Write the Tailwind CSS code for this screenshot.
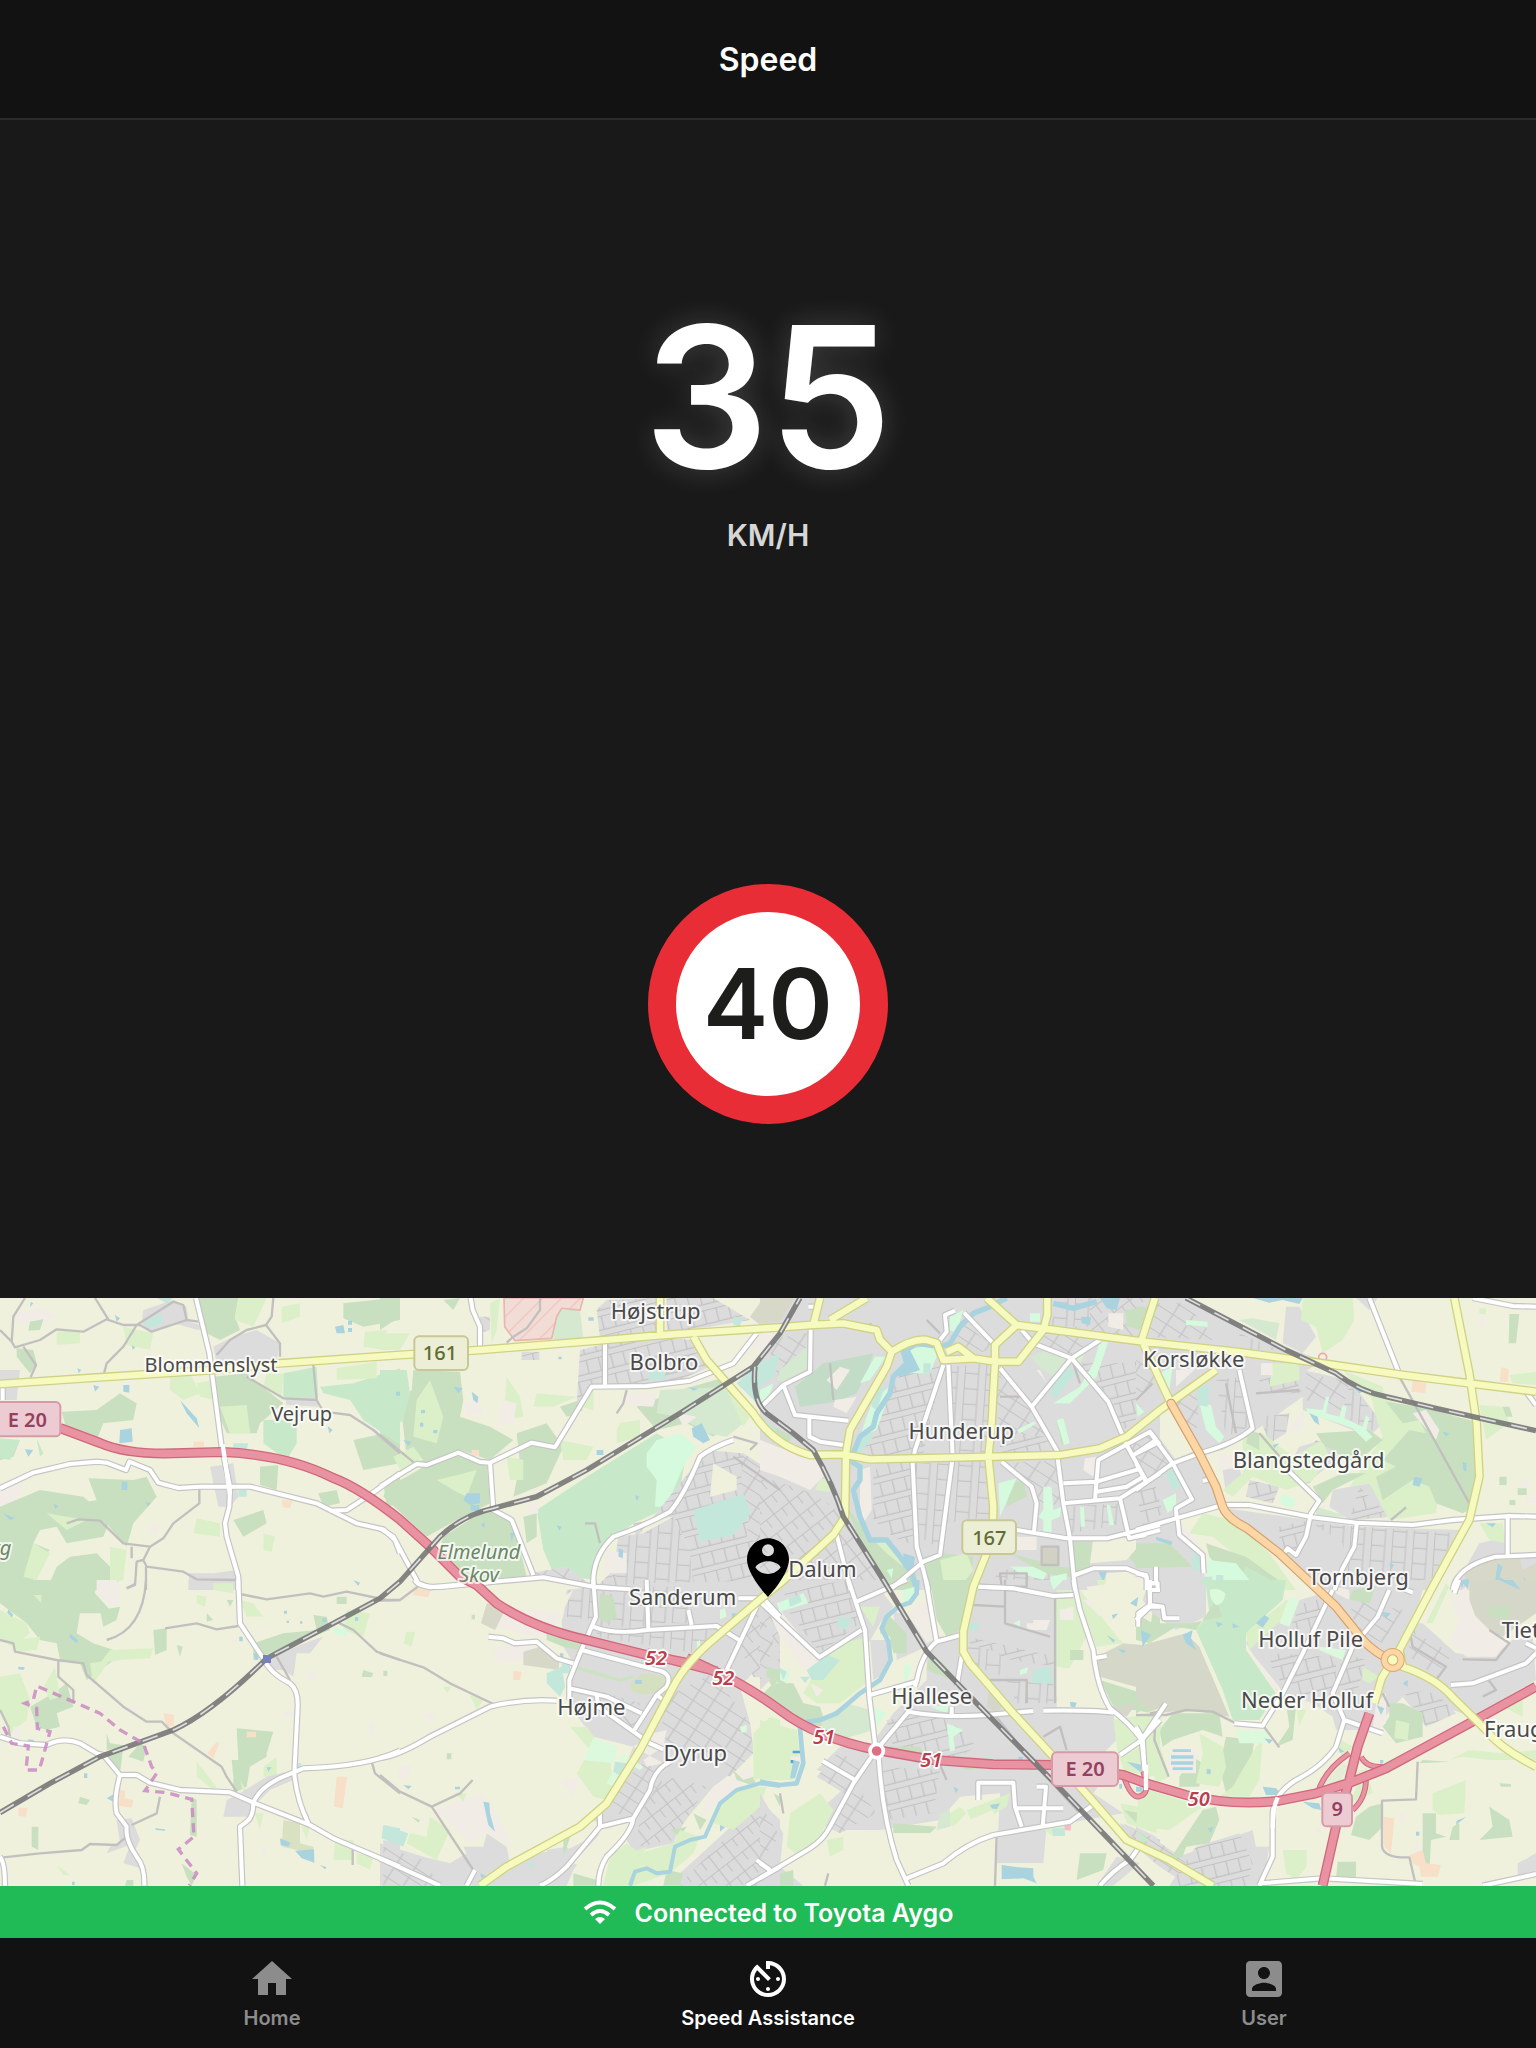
<!DOCTYPE html>
<html lang="en">
<head>
<meta charset="utf-8">
<meta name="viewport" content="width=device-width, initial-scale=1">
<title>Speed</title>
<script src="https://cdn.jsdelivr.net/npm/@tailwindcss/browser@4"></script>
</head>
<body class="flex min-h-screen flex-col bg-[#191919] font-['Inter',sans-serif] text-white">

<header class="flex h-[120px] items-center justify-center border-b-2 border-[#2b2b2b] bg-[#121212] pt-0.5">
  <h1 class="text-[32px] leading-10 font-semibold">Speed</h1>
</header>

<main class="grid flex-1 grid-rows-2">
  <section class="flex flex-col items-center justify-center pt-2" aria-label="Current speed">
    <p class="text-[196px] leading-[220px] font-semibold [text-shadow:0_0_30px_rgba(255,255,255,0.18)]">35</p>
    <p class="mt-3 text-[30px] leading-8 font-semibold text-[#d6d6d6]">KM/H</p>
  </section>
  <section class="flex items-center justify-center" aria-label="Speed limit">
    <p class="flex size-60 items-center justify-center rounded-full border-[28px] border-[#e82d37] bg-white text-[98px] leading-none font-semibold text-[#1d1d1b]">40</p>
  </section>
</main>

<section aria-label="Map">
<svg class="block w-full" viewBox="0 0 4608 1764" fill="none" role="img" aria-label="Map of southern Odense">
  <defs>
    <pattern id="s1" width="54" height="84" patternUnits="userSpaceOnUse" patternTransform="rotate(-14) scale(.7)">
      <rect width="54" height="84" fill="#dcdcdc"/><path d="M0 2H54M28 2V60M0 60H54" stroke="#c2c2c2" stroke-width="5"/>
    </pattern>
    <pattern id="s2" width="76" height="50" patternUnits="userSpaceOnUse" patternTransform="rotate(33) scale(.7)">
      <rect width="76" height="50" fill="#dcdcdc"/><path d="M0 2H76M38 2V50" stroke="#c4c4c4" stroke-width="5"/>
    </pattern>
    <pattern id="s3" width="90" height="66" patternUnits="userSpaceOnUse" patternTransform="rotate(4) scale(.7)">
      <rect width="90" height="66" fill="#dcdcdc"/><path d="M2 0V66M2 30H60M60 0V66" stroke="#c4c4c4" stroke-width="5"/>
    </pattern>
    <pattern id="s4" width="84" height="72" patternUnits="userSpaceOnUse" patternTransform="rotate(-38) scale(.7)">
      <rect width="84" height="72" fill="#dcdcdc"/><path d="M0 2H84M2 0V42M44 0V72" stroke="#c4c4c4" stroke-width="5"/>
    </pattern>
    <pattern id="hatch" width="40" height="40" patternUnits="userSpaceOnUse" patternTransform="rotate(45)">
      <rect width="40" height="40" fill="#f2ddd6"/><path d="M2 0V40" stroke="#efc5bd" stroke-width="4"/>
    </pattern>
  </defs>

  <rect width="4608" height="1764" fill="#f0f1dc"/>

  <!-- land use: north west -->
  <g transform="translate(0,-24)">
    <path fill="#dcdcdc" d="M430 60L520 30 560 50 566 95 620 110 595 120 520 100 450 130 425 100ZM640 170L700 140 770 120 840 160 830 210 650 220ZM850 300L950 280 955 350 860 345ZM630 530L700 520 715 620 690 650 655 650ZM565 850L640 850 710 840 710 900 570 900ZM0 240L60 240 50 330 0 330Z"/>
    <path fill="#f2ece6" d="M40 70L130 50 170 80 120 110 60 100ZM285 870L350 865 370 900 290 900ZM0 590L70 580 50 640 0 650ZM1110 415L1160 430 1130 450ZM440 720L480 700 470 740Z"/>
    <path fill="#c8e0c0" d="M590 24H715L705 80 720 120 660 150 620 130 590 60ZM640 260L740 250 800 300 850 340 780 400 770 430 680 430 640 340ZM185 365L290 360 360 310 410 340 400 390 310 400 290 450 200 420ZM265 565L400 570 440 560 470 620 400 700 380 770 310 690 250 690 240 640 290 630ZM0 650L120 600 250 620 330 690 310 740 200 760 170 710 120 720 100 760 150 780 90 830 110 900H0ZM210 800L290 790 360 860 340 900H140L170 830ZM1030 40L1180 24H1200V90L1090 110 1030 85ZM780 530L835 525 830 600 780 585ZM1060 450L1200 420V520L1090 540ZM955 610L1010 600 1020 640 970 650ZM1150 580L1200 560V640L1160 650ZM90 95L130 88 120 120 85 122ZM50 175L100 180 110 220 90 250 50 200ZM700 690L790 660 800 700 730 740ZM0 450H60L40 500 0 510Z"/>
    <path fill="#c8e9c9" d="M790 390L890 390V460L860 510 790 460ZM850 250L950 230 955 320 850 325ZM960 290L1060 280 1200 235V465L1090 390 1050 330 970 310ZM0 445L60 450 30 510 0 505ZM110 445L130 490 120 500Z"/>
    <path fill="#dbf0c8" d="M715 24H800L760 110 705 90ZM845 50L900 40V80L845 100ZM1095 125L1160 120 1155 180 1090 170ZM1010 235L1130 215V265L1010 270ZM660 350L740 345 750 430 690 430ZM590 280L640 270 645 330 600 320ZM510 260L570 250 600 310 550 330 510 300ZM170 125L240 120V160L170 165ZM370 110L460 130 450 180 380 165ZM590 685L660 700V740L580 730ZM790 730L825 740 815 785 790 780ZM140 670L260 690 200 720ZM100 760L150 790 110 870 70 860ZM800 250L850 250 845 320 790 290ZM330 770L380 780 370 870 330 880Z"/>
    <path fill="#c3e8db" d="M435 95L480 70 490 100 440 118ZM470 24H520L500 40ZM700 460L745 460 740 480 700 475ZM715 600L740 600V620L715 620Z"/>
    <path fill="#a8d3df" d="M360 420L395 415 398 455 358 460ZM370 285H388V308L370 305ZM540 330L590 385 598 415 560 370ZM1005 110L1030 105 1035 130 1010 130ZM75 478L100 480 85 500ZM345 75L360 85 350 95ZM365 575H382V600H365ZM10 670L45 685 30 690ZM983 408L998 420 988 430ZM280 285L298 290 285 305ZM436 635L452 640 444 650ZM92 35L100 40 90 52ZM395 165L406 172 398 180ZM232 235L244 240 236 250ZM160 640L175 648 166 658ZM1044 92h12v12h-12zM1044 114h12v12h-12z"/>
    <path fill="#f7dfc8" d="M580 455H612V470H580ZM845 630L878 632 870 655 848 652Z"/>
  </g>
  <g transform="translate(1140,-24)">
    <path fill="#c8e0c0" d="M0 24H45V90L0 120ZM100 240L240 245 250 330 240 380 330 410 400 450 330 510 240 480 130 520 80 500 60 330 95 300ZM410 430L500 400 550 470 500 580 400 620 420 520ZM80 560L200 490 320 520 330 640 230 690 140 740 10 620 20 590ZM190 740L330 650 400 690 440 860 250 870 180 770ZM190 30L240 24 220 60ZM770 350L900 300 1040 260 1070 380 1000 440 920 400 830 420ZM750 480L800 460 900 550 840 560 770 530ZM540 350L600 330 610 370 560 380ZM960 490L1000 500 990 600 930 670 880 660 940 560ZM430 680L470 670 470 740 440 760Z"/>
    <path fill="#d5e8d0" d="M520 60L600 60 610 145 520 148ZM840 300L1040 290 1090 400 1040 440 980 430 900 380 830 370Z"/>
    <path fill="#c8e9c9" d="M0 240H80L90 310 70 390 0 440ZM470 660L620 560 830 430 920 480 900 600 870 650 760 700 680 760 640 870 520 850 490 780Z"/>
    <path fill="#dbf0c8" d="M110 330L150 270 190 380 170 460 100 440ZM380 260L420 320 430 380 370 390ZM40 500L100 470 130 510 60 540ZM170 570L290 540 260 620 220 600ZM380 500L430 510 430 570 390 570ZM540 450L640 470 620 510 550 510ZM710 400L780 390 780 440 710 460ZM600 310L640 300 640 360 600 350ZM0 130H90L60 180H0ZM1040 300L1110 380 1090 410ZM470 310L590 320 520 350 460 350ZM330 40L360 24 350 120 335 160Z"/>
    <path fill="#d5fade" d="M830 450L900 430 950 470 910 530 880 600 870 650 825 650 830 570 800 530 800 490ZM980 570L1000 590 990 625 975 610ZM770 150H810V190H770ZM720 215H740V270L720 260ZM930 840L970 850 970 880 930 865Z"/>
    <path fill="url(#s1)" d="M600 180L660 165 850 140 930 150 990 230 900 270 740 285 640 285 590 340ZM680 30L830 24V130L660 145 650 60ZM860 24H1000L1110 90 990 110 860 125ZM980 480L1090 490 1200 600V900H940L930 780 880 680 760 700 800 900H640L700 840 720 780 780 730ZM425 185H478V210H425Z"/>
    <path fill="#f0f1dc" d="M1000 520L1070 560 1070 600 990 620ZM600 360L720 400 680 470 560 440Z"/>
    <path fill="url(#s2)" d="M1090 490L1200 560V800L1100 740 1110 660 1080 610ZM300 80H330V120L300 130ZM450 850L560 830 640 890 500 870Z"/>
    <path fill="url(#s3)" d="M715 740L790 730 880 680 930 780 940 895H720L700 840Z"/>
    <path fill="#f2ece6" d="M250 340L300 330 310 370 260 380ZM370 330L410 340 400 400 350 410ZM740 310L830 310 820 350 740 345ZM1130 440L1200 470V560L1150 520ZM890 370L950 380 910 410ZM680 780L740 790V850L670 850ZM450 640H475V670H440ZM1100 200L1140 130 1200 100V120Z"/>
    <path fill="url(#hatch)" stroke="#e9b5ad" stroke-width="5" d="M372 24L374 110 405 152 515 145 530 80 545 55 600 60 610 24Z"/>
    <path fill="#c3e8db" d="M940 660L1090 612 1112 670 1060 735 960 755ZM1070 280L1120 230 1200 180V290L1130 340ZM1140 350L1200 400V440L1150 390ZM1155 475L1190 470 1200 500 1165 505ZM805 240H855V270H805ZM1060 80L1085 85 1080 110 1060 105Z"/>
    <path fill="#a8d3df" d="M260 610H300V640L270 645 250 630ZM275 305L295 320 292 340 280 330ZM935 415L965 400 990 450 970 460 940 440ZM220 290L248 295 235 310ZM715 775L730 780 728 805 716 800ZM70 450L95 455 85 468ZM650 480H670V495H650ZM530 706L545 710 538 722ZM765 615L778 620 770 632ZM120 398h10v12h-10zM160 420h12v10h-12zM123 360h12v10h-12zM48 305h12v12h-12zM305 700h10v10h-10zM390 730L405 725 395 755ZM925 290L955 296 940 302ZM535 200h10v8h-10zM625 82h16v10h-16zM272 645H298V662H272Z"/>
    <path fill="#d8d8c8" d="M1150 24H1200V100L1140 105 1110 80Z"/>
    <path fill="#f7dfc8" d="M275 480H298V498H275Z"/>
  </g>

  <!-- land use: city centre -->
  <g transform="translate(2280,-24)">
    <path fill="#dcdcdc" d="M0 24H1200V900H0Z"/>
    <path fill="url(#s4)" d="M0 560L160 610 260 680 380 880 370 900H0ZM940 24H1200V150L940 120ZM150 610L180 620 230 700 190 740Z"/>
    <path fill="url(#s1)" d="M420 250L550 220 490 490 300 500 350 400ZM360 510H460V700L470 770 400 740 340 690 340 560ZM720 380L820 360 890 480 720 495ZM1070 220L1200 210V340L1090 420 1050 340 960 220Z"/>
    <path fill="url(#s3)" d="M575 230L690 220 690 490 575 495ZM575 515L690 510 700 680 555 700ZM465 520H570L545 780 480 740ZM900 24H990V110L870 110ZM720 240L800 340 720 380ZM920 650L1080 640 1100 700 930 730ZM720 840L900 830 930 900H680Z"/>
    <path fill="url(#s2)" d="M700 240L810 350 870 440 720 430ZM1100 460L1180 430 1200 470V560L1160 560ZM730 520L890 510 910 640 830 650 820 600ZM600 90L700 170 640 200 580 150ZM860 120L1000 140 940 200 820 160ZM20 150L140 130V240L60 280Z"/>
    <path fill="#d8d8c8" d="M0 24H105L60 95 0 100Z"/>
    <path fill="#c3dcc8" d="M105 290L190 220 340 190 320 250 290 310 230 335 120 350Z"/>
    <path fill="#c8e0c0" d="M260 650L330 740 390 750 440 830 470 850V900H390L290 730ZM490 800L550 790 640 800 630 900H500ZM750 580L790 570 800 620 740 650ZM940 755H995L990 840H940ZM1100 790L1200 750V830L1130 830ZM750 790L900 830 1000 840 930 860 850 850ZM1095 60L1180 50 1150 120 1100 110ZM0 390L100 440 80 460 20 430ZM890 390L910 385 930 460 905 465Z"/>
    <path fill="#d5e8d0" d="M60 240L140 170 145 235 80 280 50 270ZM810 200L860 180 930 210 880 260 850 240Z"/>
    <path fill="#dbf0c8" d="M180 570L210 560V605L165 600ZM540 810L620 790 640 840 610 880 550 870ZM330 740L400 760 430 830 380 790ZM940 200L980 180 960 220Z"/>
    <path fill="#d5fade" d="M430 180L520 165 530 200 510 250 440 250 470 220ZM345 200H378L330 270 300 280ZM1020 155H1045L1010 260 930 340 880 340 960 290 1000 220ZM340 330L400 280 350 420 300 440 320 380ZM850 590H875L880 660 905 650 900 680 875 690V730H850V690L835 680 850 660ZM960 650H972L975 710H962ZM1040 645H1050L1062 705H1048ZM570 80L610 60 590 130 570 120ZM770 420L820 395 830 400 780 430ZM750 830L820 830 860 850 850 870 780 850ZM870 860L920 850V900H880ZM890 390L910 385 930 460 912 465ZM715 580L770 565 720 680ZM0 300L40 280 20 340 0 340ZM1130 340L1155 350 1140 375ZM810 70H840V95H810ZM380 840L400 835 395 865Z"/>
    <path fill="#c3e8db" d="M0 220L60 190 40 260 0 290ZM890 250L930 230 945 250 890 325 870 310ZM20 480L50 470 60 500 30 510ZM340 300L375 290 350 360 335 350ZM310 440L325 420 340 440 300 490 280 480ZM490 220H512V250H490ZM0 380L50 420 30 430 0 400Z"/>
    <path fill="#f2ece6" d="M0 450L130 500 170 500 190 560 150 600 60 560 0 540ZM300 540L330 530 335 660 310 700 300 640ZM225 330L290 320 260 370 220 350ZM975 505L1010 500 1000 560 970 540ZM200 270L240 230 270 240 230 300ZM840 240L860 280 830 240ZM770 740L830 740 830 780 770 780ZM1045 70H1090V120L1045 110ZM0 120L60 120 20 180 0 190Z"/>
    <path fill="#f0f1dc" d="M1000 750L1160 740 1100 810 990 820ZM1040 850L1160 840V900H1030Z"/>
    <path fill="#d2d2c4" d="M845 770H895V825H845Z"/>
    <path fill="#a8d3df" d="M963 80L993 82 990 105 965 100ZM422 190L450 180 480 240 420 260 400 250 440 220ZM1015 845H1040L1030 875ZM430 790L465 800 460 840 430 830ZM1020 24H1080L1070 60 1040 55ZM815 885h15v14h-15z"/>
    <path stroke="#a8d3df" stroke-width="16" stroke-linejoin="round" d="M740 24L690 50 640 70 600 110 570 160 540 170 470 160 430 185 440 220 400 260 390 310 350 370 340 410 300 440 280 490 275 515 300 530 300 570 280 600 300 680 330 750 380 750 420 800 455 850 470 900M880 40L940 55 1010 35"/>
  </g>

  <!-- land use: north east -->
  <g transform="translate(3408,-24)">
    <path fill="#dcdcdc" d="M50 24H150L300 95 440 170 560 210 500 250 500 320 360 420 260 480 190 490 110 330 0 400V130ZM450 50H490L540 140 500 190 440 160ZM0 440L60 430 120 510 180 480 240 600 250 650 120 690 0 720ZM660 24H725L700 60ZM500 240L640 270 740 400 700 440 500 360ZM490 470L560 450 610 500 500 590 440 560ZM260 540L310 530 320 570 270 610ZM590 600L700 580 770 680 640 690 580 650ZM270 655L520 690 660 710 980 720 900 900H540L430 790 290 690ZM950 900L1030 760 1110 740 1110 800 1200 800V900ZM0 720L120 690 200 800 210 900H0Z"/>
    <path fill="url(#s2)" d="M50 40H150L240 150 30 140ZM0 440L50 430 100 520 0 590ZM110 330L190 300 180 480ZM510 250L640 275 620 370 510 330ZM0 210L70 250 0 330Z"/>
    <path fill="url(#s3)" d="M240 270L310 260 340 410 270 440ZM370 380L460 370 450 430 400 460ZM530 700L960 730 880 880 640 870 620 760ZM640 280L740 400 690 430 620 370ZM310 130L430 180 310 180Z"/>
    <path fill="url(#s1)" d="M340 570L430 590 410 640 330 620ZM670 590L760 680 640 690ZM540 450L600 480 520 580 460 560ZM370 260L470 250 500 310 370 310ZM0 600L60 590 80 670 20 710ZM430 710L520 690 480 790 430 780Z"/>
    <path fill="#f0f1dc" d="M160 30L440 40 430 95 310 60Z"/>
    <path fill="#dbf0c8" d="M500 24H650L655 90 620 150 560 190 540 110 495 90ZM700 300L760 330 830 360 900 400 830 560 910 600 900 670 760 690 700 580 640 590 740 440 720 380ZM320 440L380 430 470 500 560 450 580 500 530 570 450 600 350 560 290 620 260 600 320 550ZM1030 345L1100 350 1120 400 1050 450ZM410 220L490 220 490 270 400 290ZM1120 255L1200 245V285L1130 280ZM200 670L290 690 400 790 480 900H430L230 740 160 730ZM1030 700L1100 700 1110 760 1060 750ZM620 240L740 290 750 340 680 310ZM1030 55H1050V72H1030Z"/>
    <path fill="#d5e8d0" d="M350 85L430 100 420 150 310 90ZM540 650L640 680 540 680Z"/>
    <path fill="#c8e0c0" d="M750 335L850 350 1020 395 1030 600 1000 660 980 670 900 640 880 590 830 570 740 630 720 560 780 530 740 510 820 420 870 430 850 390 800 400ZM540 430L700 420 740 450 660 520 600 490 560 460ZM530 590L620 550 690 550 590 600 560 640ZM0 760L100 760 170 830 0 835ZM1120 72H1150L1140 160H1118ZM1100 350L1120 350 1130 380 1110 380ZM1090 560H1112V585H1090ZM1145 595H1172V615H1145ZM1120 630H1138V645H1120ZM340 420L370 430 370 480 330 460ZM0 50H25V110L0 120ZM210 760L330 800 440 880V900H300L220 800Z"/>
    <path fill="#c8e9c9" d="M330 830L440 890V900H290Z"/>
    <path fill="#d5fade" d="M190 340L225 345 240 410 265 440 250 460 210 420ZM150 90L215 95 215 110 150 105ZM510 355L560 360 570 320 580 320 570 370 610 380 620 345 632 350 625 385 680 410 690 375 700 385 690 420 710 440 690 455 650 415 580 390 515 370ZM80 630L120 610 120 650 95 670ZM440 610L480 630 470 655 430 640ZM215 810L300 820 340 870 300 895 210 895ZM70 250L110 230 100 300ZM0 340L25 365 5 380Z"/>
    <path fill="#c3e8db" d="M185 280L220 290 215 350 185 345ZM90 550L115 535 135 590 110 600ZM170 790L200 790 200 840 170 840ZM205 860h24v30h-24zM240 855h22v30h-22z"/>
    <path fill="#f2ece6" d="M240 490L290 495 290 535 250 540ZM375 220H410V255H375ZM830 370L870 360 910 420 900 450ZM1030 75H1048V115H1030ZM1155 570H1180V590H1155ZM450 430L500 360 500 420ZM120 690L200 770 160 750 120 740ZM1170 620H1200V640H1170ZM0 850H30V900H0ZM120 240L180 235 120 290Z"/>
    <path fill="#d8d8c8" d="M985 850L1060 800 1150 800 1160 840 1200 820V900H990Z"/>
    <path fill="#a8d3df" d="M520 370L545 380 550 405 535 395ZM650 290L690 300 670 310ZM350 24H500L490 42 440 30 400 38ZM980 515L992 520 990 545 982 540ZM975 870L1000 868 995 895 975 890ZM1050 700L1080 700 1070 712ZM920 425L940 430 930 440ZM1085 820L1100 830 1090 860 1120 880 1140 890 1110 895 1078 870ZM760 820L775 825 765 838ZM410 465L430 460 415 475ZM60 740L110 755 105 765 60 750ZM835 560L860 565 850 590 830 585ZM1160 860L1190 890 1175 890Z"/>
    <path fill="#f7dfc8" d="M830 270L870 280 868 310 826 305ZM1095 232L1118 238 1115 275 1092 275Z"/>
    <circle cx="560" cy="202" r="12" stroke="#f3a3b0" stroke-width="5"/>
  </g>

  <!-- land use: south west -->
  <g transform="translate(0,846)">
    <path fill="#c8e0c0" d="M0 0H290L285 40 330 90 300 100 240 100 230 160 280 190 370 220 260 300 240 250 180 240 170 190 120 180 80 130 0 70ZM300 90L360 80 350 120 310 140ZM460 150L500 145V210L465 225ZM90 380L160 340 200 310 220 380 170 400 180 440 140 450 110 440ZM710 445L820 455 800 520 800 530 750 560 740 620 700 640 700 590 695 540 715 540ZM760 190L850 160 950 150 940 105 980 110 990 150 880 190 760 240ZM310 530L370 500 360 580 330 560ZM420 490L440 500 430 545 385 530ZM95 740H115V810L95 800ZM575 650L590 660 590 770 570 765ZM240 650L270 660 260 675 235 670ZM1090 270L1120 280 1115 292 1085 290ZM1010 50H1040V72H1010ZM320 460L330 490 400 500 320 510ZM530 195L548 200 540 230ZM380 900L400 900V917H375ZM530 810L545 850 590 885 575 917 560 890ZM620 100L640 120 620 125ZM680 60L700 60 690 80Z"/>
    <path fill="#dbf0c8" d="M0 90L80 130 90 160 40 200 0 180ZM330 210L460 205 450 235 360 240 300 250ZM270 250L330 240 280 310ZM0 290L60 280 90 360 80 420 30 460 0 390ZM130 320L165 260 180 350 150 360ZM590 545L650 620 640 630 590 590ZM640 10L700 10 700 40 640 30ZM720 60L760 70 790 110 740 110ZM1040 90L1110 100 1090 170 1030 150ZM590 45L620 50 615 80 590 70ZM790 560L830 530 830 590 790 590ZM905 740L930 740 920 780ZM1005 780L1060 780 1060 840 1000 840ZM1070 820L1120 830 1110 870 1070 850ZM170 855L210 885 190 885ZM765 700H790L780 750ZM720 600L745 640 730 640ZM40 180L120 170 110 210 50 215ZM100 45h24v24z"/>
    <path fill="#dcdcdc" d="M565 0L640 0 620 25 565 30ZM810 230L940 180 970 170 930 220 890 220 880 290 850 270 800 270ZM680 660L720 640 800 590 880 570 880 600 810 630 760 680 750 710 670 710ZM350 720L395 715 420 780 400 820 440 870 370 850 390 795 320 820 330 800 360 790ZM1150 780L1200 790V917H1150Z"/>
    <path fill="#f2ece6" d="M290 0L350 0 360 60 340 80 290 40ZM380 380L430 380 400 400ZM40 440L60 440V480L40 490ZM60 600L90 610 80 620ZM380 0L420 0 400 30ZM850 390H880V410H850ZM1110 420L1125 430 1120 480 1108 470ZM690 180H710L700 200ZM780 795L805 810 790 830ZM930 270H945V300H920Z"/>
    <path fill="#d8e2c2" d="M850 720L900 730 900 790 940 800 940 820 845 800Z"/>
    <path fill="#f7dfc8" d="M490 400L522 405 522 435 500 445ZM650 485L658 490 640 535 622 520ZM740 455H768V472H740ZM1010 590L1042 590 1028 685 1002 680ZM360 630L375 632 375 655 400 660 395 683 357 678ZM55 683L82 685 78 710 56 708Z"/>
    <path fill="#d5fade" d="M1000 140L1040 150 1040 170 1000 160Z"/>
    <path fill="#c3e8db" d="M1150 735L1200 745V790L1145 770ZM885 548L905 550 900 565 885 560Z"/>
    <path fill="#a8d3df" d="M210 160L235 182 230 190 208 172ZM840 775L872 788 865 800 842 795ZM885 812L942 808 943 848 905 835ZM960 855L980 862 975 868ZM25 88L40 105 35 112 22 98ZM55 260L75 262 70 270 55 268ZM85 478L102 480 95 490 84 486ZM718 170h10v14h-10zM760 220H775V240H765ZM800 562L815 562 805 575ZM465 745L495 748 495 752 468 750ZM320 655L345 640 340 665ZM967 115h12v12h-12zM1065 112h10v10h-10zM1060 0L1080 8 1075 18ZM852 92h9v9h-9zM860 122h7v7h-7zM900 124h7v7h-7zM252 580h10v14h-10zM216 905h8v10h-8z"/>
  </g>
  <g transform="translate(1140,846)">
    <path fill="#dcdcdc" d="M580 30L640 24 800 10 1200 0V190L1080 320 1110 430 1120 500 1080 560 1000 620 900 740 880 790 760 815 740 780 640 720 700 640 760 500 640 470 600 420 560 360 580 250 550 200 545 120ZM0 790L130 830 210 850 260 820 250 800 310 800 320 760 380 800 390 850 460 820 560 810 660 760 580 870 560 917H0ZM900 880L1140 660 1200 720V917H900ZM500 810L560 800 590 830 520 880Z"/>
    <path fill="url(#s3)" d="M560 30L640 20 640 120 550 110ZM650 150L1010 130 950 220 650 170ZM810 20H920L930 130H810ZM660 30L720 50V130L660 140ZM720 20H800V140H720Z"/>
    <path fill="url(#s2)" d="M860 350L1000 280 1110 430 1120 520 1050 590 840 470ZM690 640L800 540 850 610 770 710 700 700ZM10 800L130 840 180 917H10Z"/>
    <path fill="url(#s4)" d="M780 700L860 590 980 620 880 780 770 800ZM930 880L1140 670 1200 740V917H900ZM1070 180L1130 90 1200 110V300L1120 290ZM650 330L780 370 760 440 660 400Z"/>
    <path fill="#f2ece6" d="M370 80L550 100 500 180 340 140ZM340 200L470 190 440 230 400 250 345 240ZM160 690L300 640 350 700 400 800 320 760 270 790 210 730ZM1000 620L1110 560 1120 590 950 720ZM60 560L100 550 80 600 50 590ZM820 460L860 450 850 500 790 540 800 560 850 550 760 500ZM540 600L600 590 580 650ZM130 400L170 400 150 430Z"/>
    <path fill="#f0f1dc" d="M580 850L670 750 750 720 740 780 660 860 650 880ZM550 50L580 30 540 110Z"/>
    <path fill="#c8e0c0" d="M500 150L610 190 590 210 550 200 500 180ZM660 40L700 50 710 110 680 130 655 110ZM650 180L900 230 850 230 660 200ZM1060 570L1090 600 1120 590 1130 620 1070 600ZM940 700L980 720 960 750ZM860 870L910 880 900 917H850ZM550 770L575 760 550 830ZM580 880L650 900V917H580ZM1180 640L1200 650V680ZM275 104h10v14h-10zM10 272h12v16h-12zM200 520h14v18h-14zM95 710L120 720 115 728ZM1165 300L1200 260V360ZM870 750L920 740 900 770Z"/>
    <path fill="#dbf0c8" d="M570 440L620 440 690 540 700 610 680 660 640 650 590 580 630 510ZM80 155H105L95 200 70 190ZM190 320L215 320 200 340ZM270 345L310 360 290 390ZM150 710L210 750 170 840 80 790 90 760 140 770ZM1120 460L1170 410 1200 420V580L1120 600ZM1040 650L1100 620 1160 620 1140 680 1060 750 1000 730 1010 690ZM690 830L740 790 780 820 880 790 900 750 960 770 940 820 870 880 760 917H670ZM225 640L260 640 250 665ZM1160 265L1200 300V320ZM720 830L800 800 780 840Z"/>
    <path fill="#d8d8c8" d="M320 70L378 85 345 150 303 130ZM430 215L480 200 540 230 535 270 430 255Z"/>
    <path fill="#d5e0c0" d="M750 310L790 280 860 290 850 330 800 345 755 335Z"/>
    <path fill="#dcf9de" d="M640 475L710 500 705 550 610 540ZM730 520L790 560 780 570 740 550 700 620 680 610ZM1020 90L1035 85 1040 110 1020 118ZM1155 330L1200 300V350ZM1080 440L1100 435 1100 455 1085 458ZM950 185L960 180 960 205 952 205ZM1170 80L1200 70V100Z"/>
    <path fill="#c3e8db" d="M500 280L545 260 555 320 540 350 500 310ZM545 250L570 250 570 280 545 280ZM705 545L740 550 725 590 700 575ZM12 735L85 760 70 800 5 775ZM445 850H460V862H445Z"/>
    <path fill="#f7dfc8" d="M110 25L152 30 145 52 98 45ZM400 272L425 275 420 300 400 300Z"/>
    <path fill="#a8d3df" d="M765 300H785V312H765ZM310 665L328 668 330 700 345 755 325 735ZM300 880L318 888 305 895ZM70 615L95 618 85 628ZM225 620H240V628H225ZM1020 735L1035 742 1020 755ZM1055 100H1068V112H1055ZM540 220h10v14h-10z"/>
    <path stroke="#a8d3df" stroke-width="12" stroke-linejoin="round" d="M750 917L765 875 800 865 830 880 870 875 885 800 930 780 975 770 1020 670 1070 630 1140 610 1200 618"/>
    <path stroke="#cbe3c0" stroke-width="10" d="M580 260L680 290 720 300 760 290"/>
  </g>

  <!-- land use: south east -->
  <g transform="translate(2280,846)">
    <path fill="#dcdcdc" d="M60 0H360L370 40 400 80 360 130 320 200 180 240 90 150 0 90ZM0 90L60 220 40 290 0 330ZM400 90L560 180 610 0H940L960 80 900 200 890 380 1060 400 1070 480 1030 520 1080 530 1000 640 1090 700 860 740 850 850 710 850 720 640 600 650 540 720 360 750 200 750 180 690 280 600 170 570 240 500 330 500 400 400 500 300 500 200 410 240ZM330 180L400 180 380 280 340 300ZM0 640L70 760 60 860 130 917H0ZM1080 730L1200 780V830L1090 760ZM1010 917L1070 830 1140 850 1060 917Z"/>
    <path fill="url(#s1)" d="M70 30L270 0 300 130 180 220 90 100ZM620 170L890 230 880 260 640 220ZM360 560L540 570 520 700 380 720ZM380 420L550 400 650 500 560 550 400 500Z"/>
    <path fill="url(#s3)" d="M740 300H880L880 370 770 370ZM600 180L720 220 740 290 640 260Z"/>
    <path fill="url(#s2)" d="M0 100L40 180 20 280 0 300ZM170 590L240 510 310 580 270 650ZM200 740L290 620 350 700 240 760ZM0 670L60 770 0 840ZM1090 730L1200 780V820L1130 790ZM980 24L1020 10 1010 40Z"/>
    <path fill="#dbf0c8" d="M180 250L250 190 320 170 330 300 240 370 170 370 130 340ZM0 420L110 450 120 520 100 600 0 600ZM890 30L960 30 1090 190 1010 200 990 150 900 320 890 260ZM1060 420L1170 400 1200 400V580L1170 590 1090 570 1070 500ZM90 700L180 640 220 690 180 770 120 830 80 800ZM200 780L250 770 250 810 210 830ZM620 690L750 640 740 680 640 740ZM1080 670L1190 690V760L1100 730ZM840 740L930 730 880 770ZM540 720L600 680 620 700 580 740ZM300 80L360 80 340 140ZM1010 0L1040 0 1020 30Z"/>
    <path fill="#c8e0c0" d="M40 310L100 310 130 370 180 380 200 440 110 430 0 350ZM380 100L440 160 440 220 400 220 390 170 360 160ZM510 0H630L600 150 560 170 530 120ZM510 220L550 250 600 310 500 270ZM370 500L480 500 500 540 380 530ZM960 820L1040 820 1030 870 950 900ZM1020 300L1180 350V400L1060 380ZM560 550L700 560 620 570ZM400 730L530 740 510 760 400 760ZM1180 80L1200 60V170L1170 150ZM930 210H970V240H930ZM60 880L100 870V917H60ZM20 260L60 270 80 320 20 290ZM1090 690L1140 700 1130 730Z"/>
    <path fill="#d5e8d0" d="M180 420L260 370 330 390 340 450 240 480 190 450ZM540 700L570 690 570 740 530 750Z"/>
    <path fill="#f2ece6" d="M440 100L500 60 540 170 500 190ZM20 80L60 90 180 240 150 290 120 250 60 170ZM820 120L870 120 860 150 820 140ZM900 90L940 80 940 120 900 120ZM150 310L190 330 170 350ZM90 530L130 530 130 580 100 570ZM970 60L1060 50 1020 110ZM800 130h60v20h-60z"/>
    <path fill="#f0f1dc" d="M130 870L220 830 350 760 400 760 530 760 700 690 710 917H170ZM860 780L960 760 950 880 930 917H710V850L860 850ZM890 260L960 270 960 350 890 350ZM980 20L1150 0 1130 180 1080 180 1000 80Z"/>
    <path fill="#d5d8c8" d="M1010 230L1090 190 1200 200V380L1160 330 1020 290ZM1050 380L1130 370 1100 410ZM685 340L740 360 710 400 680 380Z"/>
    <path fill="#d5fade" d="M50 70L130 40 145 70 60 95ZM560 430L610 450 580 470 585 510 570 515ZM435 250L455 260 440 310 430 300ZM780 270L805 262 800 280 780 285ZM340 380L380 400 350 440ZM760 130L780 120V138ZM60 270L90 270 80 310 60 300ZM430 30L465 20 460 60 430 70ZM870 0H910L880 30ZM510 380L570 375 560 400Z"/>
    <path fill="#c3e8db" d="M85 55L120 45 125 65 90 80ZM235 110L275 115 260 150 230 140ZM140 270L200 225 240 240 190 300 155 300ZM820 270L870 260 880 310 815 310ZM630 130L655 128 655 150 630 152ZM120 290L150 290 135 310ZM55 260L80 275 70 300ZM875 745H915V768H880Z"/>
    <path fill="#a8d3df" d="M725 855L775 862 820 865 820 890 830 910 790 895 725 898ZM690 675L720 670 710 688 695 685ZM100 540L120 545 105 595 90 595ZM930 365L950 368 945 382 932 380ZM1040 165L1065 180 1060 188ZM1110 70L1135 50 1130 80ZM1150 150L1165 160 1160 180 1145 175ZM580 620L595 628 588 640ZM775 530h14v12h-14zM1070 205L1100 212 1090 220ZM1055 105L1075 100 1060 118ZM1100 545L1150 555 1140 575ZM1078 612h8v14h-8z"/>
    <path fill="#5aa2dc" d="M98 512H123V520H98ZM92 540H100V550H92Z"/>
    <path fill="#f9b9c6" d="M912 735L933 733 932 752 915 750Z"/>
    <path stroke="#a8d3df" stroke-width="14" stroke-linejoin="round" d="M472 0L470 40 450 68 415 80 380 110 365 145 385 185 392 240 360 300 300 340 230 400 180 420 145 425 120 445 125 500 130 550 110 610 60 615 0 605"/>
  </g>
  <g transform="translate(3408,846)">
    <path fill="#dcdcdc" d="M40 0H210V110L120 150 50 100 20 60ZM490 60L700 0H870L830 130 860 130 960 220 1070 230 1130 180 1190 170 1200 300 1010 410 950 390 870 440 840 400 800 350 710 450 600 450 590 410 530 370 420 330 330 190 390 110ZM0 740L60 770 100 840 350 750 360 800 400 800 380 917H230ZM1145 850L1200 820V880L1145 885ZM980 10h30v20h-30z"/>
    <path fill="url(#s2)" d="M640 60L800 90 740 190 660 150ZM0 740L60 780 220 890 160 917 70 860 0 800ZM820 150L950 220 900 290 820 230Z"/>
    <path fill="url(#s1)" d="M400 220L600 230 600 330 480 350 410 280ZM500 70L580 50 530 150 450 160ZM180 800L310 760 350 850 330 917H100ZM800 330L900 340 960 400 870 440ZM620 220L690 240 660 350 600 330Z"/>
    <path fill="#d5d8c8" d="M0 200L150 160 190 200 280 410 160 390 60 400 0 360ZM1000 0H1200V100L1100 170 1030 140 1000 60Z"/>
    <path fill="#c8e9c9" d="M190 0H450L440 60 330 160 330 210 420 340 370 420 290 420 260 330 180 150 220 100 210 20ZM0 750L40 780 20 790Z"/>
    <path fill="#c8e0c0" d="M50 130L160 130 260 110 240 60 180 150 120 140 40 190 0 180V100ZM110 400L250 400 260 470 200 450 110 480 80 500 70 450ZM270 470L355 480 340 590 270 640 250 560ZM170 530L200 550 190 620 130 620 130 590ZM200 690L240 680 250 720 220 790 150 800 140 830 100 840ZM450 370L480 380 470 480 420 500 460 440ZM700 680L740 670V740L700 780 645 765 660 710ZM1060 680L1120 720 1130 770 1030 780 1070 740ZM605 845L660 845V890L600 895ZM760 370L800 370 860 400 860 470 780 490 740 440 760 410ZM860 700L900 700 900 760 930 770 885 780 880 880 860 870ZM1060 90L1130 80 1110 120ZM650 30L720 20 700 70 640 60ZM860 540L940 545 850 550ZM1090 610L1125 612V620H1095ZM0 340L20 390 0 400ZM1060 80h60v30h-60zM950 740L970 730 970 780 940 780Z"/>
    <path fill="#dbf0c8" d="M0 410L80 380 70 490 100 590 60 610 30 490ZM190 460L260 500 270 560 250 620 180 610 200 520ZM450 60L490 70 340 210 330 160ZM360 500L380 480 370 600 340 650 250 650 290 620ZM440 810H512V860L480 900 450 880ZM780 420L820 430 815 480 775 475ZM890 640L990 600 985 700 910 705 890 690ZM940 540L1000 510 1100 520 1200 510V540L1060 540 980 530ZM680 260L730 290 700 310 680 300ZM10 620L200 680 100 750 0 740ZM600 470L650 500 620 540ZM480 380L510 390 490 440ZM1100 380L1160 360V410ZM690 560L710 640 640 670ZM870 130L930 10 940 20 890 130Z"/>
    <path fill="#f2ece6" d="M330 200L410 320 440 340 430 320 340 210ZM90 540L130 500 180 510 180 580 110 580ZM600 20L640 30 640 60 600 40ZM940 60L990 20 1010 100 1060 150 1110 190 1080 230 990 230 940 180 970 120ZM870 470L1000 420 910 440ZM720 370L750 340V430L710 450ZM540 740h14v20h-14zM830 800L850 790 850 830ZM790 700h14v30h-14zM340 440h26v26h-26z"/>
    <path fill="#dcf9de" d="M460 50L490 60 460 140 430 130ZM220 30Q245 20 268 40Q265 75 240 75Q220 60 222 30ZM550 200L630 210 620 240 550 210ZM300 450L400 450 390 490 310 490Z"/>
    <path fill="#f7dfc8" d="M742 710L775 715 765 820 745 800ZM820 825L860 810 870 850 915 855 905 890 855 890 850 860 820 845Z"/>
    <path fill="#a8d3df" d="M360 130L385 105 400 115 380 143ZM380 620L420 625 440 645 390 645ZM110 508H165V516H110ZM105 526H172V536H105ZM105 544H172V554H105ZM110 562H170V570H110ZM140 165L170 150 165 175 180 210 150 190ZM15 150L45 165 20 200ZM500 665L550 670 555 690 530 685ZM990 710L960 735 962 722ZM212 568h12v14h-12zM290 130L310 140 290 145ZM240 125L262 132 245 142ZM385 475L410 480 400 492ZM735 95L765 100 750 115ZM722 375L745 385 735 405ZM800 310L815 300 815 320ZM605 500L625 515 612 518ZM840 755h10v12h-10zM215 745L232 740 225 760ZM1090 0H1130L1155 30 1120 15ZM975 5L1000 0 995 25ZM0 620H20V635H0ZM828 130L840 165 830 155ZM732 540h10v10h-10z"/>
    <path fill="#e4eed6" d="M560 610L620 550 640 560 600 620ZM650 570L690 570 670 590Z"/>
  </g>

  <!-- minor lanes -->
  <g stroke="#c2c0be" stroke-width="7" stroke-linejoin="round">
    <path transform="translate(0,-24)" d="M75 24L40 80 35 155 0 120M35 155L45 172 120 150 170 118 250 125 320 88 370 105 420 105 455 125 560 90 595 95M285 24L325 88M70 170L108 225 92 262M312 250L320 220 370 170 410 105 520 35 550 45 560 90M650 195L690 150 740 120 798 105 840 160 840 200M798 105L815 80 820 24M740 260L850 325 950 330 940 225M950 330L970 365 1050 375 1120 420 1200 490M200 700L235 688 300 692 370 760 450 770M598 595L598 640 520 700 490 745 450 770 430 810 410 815 405 885 380 895M430 810L440 830 550 845 590 868 710 870M438 830V900M395 770V805"/>
    <path transform="translate(1140,-24)" d="M0 435L105 520M480 24L480 60 440 115 400 140 380 158M740 300L730 340 710 370M615 700L645 700 660 760M1060 440L1130 460 1110 480M1060 500L1200 600"/>
    <path transform="translate(0,846)" d="M0 180L40 190 45 215 170 240 250 250 260 285 370 380 440 425 485 425 520 460 665 560 680 590 710 635M175 240V290L220 330V370M495 145L590 130 650 148 715 138M720 42L800 58 930 40 970 50 1040 35 1160 60 1200 60M1015 128L1060 150 1130 215 1200 240M438 0Q430 150 320 180M0 390L25 440 30 470M10 832L120 820 245 810 270 792 350 795 380 770M395 735L470 700 480 650M830 230L870 300M1115 545L1125 580 1200 640M1058 800V855M380 25L405 12"/>
    <path transform="translate(1140,846)" d="M0 62L60 60 120 15M0 220L130 262 210 310 340 372M0 585L60 635 155 680 280 870M155 680L240 640 278 600"/>
    <path transform="translate(2280,846)" d="M640 75L735 80M735 0V130L870 170M885 50V370M660 300L800 300 800 370M700 400L830 560 960 700M850 470L900 440 920 510M705 917L710 760M540 555L560 600M195 917L205 880M60 640L70 700M1170 400L1200 395"/>
    <path transform="translate(3408,846)" d="M0 405L90 405 150 390 230 395 300 430M60 400L55 480 98 590M380 435L430 502M845 545L840 658 738 662V800Q745 835 820 832L840 917M740 340L760 380M1060 150L1120 190 1080 240 980 238M820 150L830 200 930 260 900 300M1040 350L1080 330 1050 290"/>
    <path transform="translate(3408,-24)" d="M790 260L1000 640M765 690L810 652M370 430L440 510M300 180L380 200M360 310L490 300M270 280L300 430M0 330L50 280"/>
    <path transform="translate(2280,-24)" d="M210 220L220 330M330 100L360 160M500 90L540 130M720 850H800V890H725ZM845 770H895V825H845ZM940 220L960 280M720 320H790"/>
  </g>

  <!-- white roads: one set of shapes, drawn as casing and then as fill -->
  <defs>
    <g id="w">
      <g transform="translate(0,-24)"><path d="M588 24L628 190 665 470 690 590 688 650 675 700 680 740 715 860 715 900M0 595L100 548 210 522 290 515 320 518 378 540 388 515 450 540 475 578 535 594 600 590 750 590 950 640 1070 700 1150 718 1185 750 1200 790M990 662L1040 660 1105 618 1200 550M8 290V330"/></g>
      <g transform="translate(1140,-24)"><path d="M272 24L278 60 300 110V170M675 160V285M0 590L110 522 140 525 235 488 300 516 330 518 455 458 525 472 635 290 800 288 930 272 1060 220 1130 130M330 518L340 660 395 690 460 855M0 715L40 740 115 880 150 892 490 862 640 890 700 895M640 890Q635 800 700 740 790 710 870 665 910 620 960 500 1000 470 1060 450 1120 385L1200 300M770 710L803 900M875 670L920 830 925 900M1000 24L1040 52 1060 45 1070 24M1060 50L1140 105M1100 80L1140 24"/></g>
      <g transform="translate(2280,-24)"><path d="M152 120L150 245 70 285 0 355M70 285L105 375 265 392M148 380V440L180 455 250 465M550 225L465 480 458 520 470 770 490 840 505 900M565 225L578 500 540 795 490 815 395 895M612 68L700 160M720 235L815 350 890 480 910 640 930 745 945 900M815 350L935 205 1020 150M785 120L820 160 935 205 1045 335 1100 465 1160 575M725 515L815 590 830 640 822 725M770 720L920 745 1040 745 1200 705M910 640L1080 625 1160 575 1200 550M1080 625L1108 745 1200 720M910 580L1010 575 1145 535M1005 630L1015 510 1170 425 1200 465M1010 605L1100 590 1150 560M1120 495L1190 460M945 855L1000 835 1100 835 1160 860V900M585 62L555 75 560 125 540 150M230 735L272 900M655 890L760 895M145 50H165"/></g>
      <g transform="translate(3408,-24)"><path d="M700 24L795 265M1010 24L1130 48 1200 50M310 240L350 415Q300 460 190 490L110 520 0 600M0 490L60 450M110 520L168 628 120 655 122 685M40 425L110 520M0 720L120 685 260 645 340 645 530 682 660 698 830 705 950 690 1120 678 1200 680M0 740L30 735M125 690L130 735 200 795 203 850M460 545L550 632 525 670 510 740 480 795 455 775 440 795M662 700L655 770 620 835 595 900M200 572L230 568M1115 680V795M950 900Q960 830 1080 800L1200 795M1170 305L1200 345M0 850L30 855 40 900M60 830V880H30M0 520L30 575"/></g>
      <g transform="translate(0,846)"><path d="M715 0L720 130 790 235Q810 280 870 310 895 330 893 380L883 580Q890 660 925 730M0 470L60 490 140 495Q190 470 240 490L290 520 310 525 360 585H410L450 608 540 630 690 637 760 668 930 735 1000 775 1200 860M760 668Q780 620 850 590L910 565Q1100 560 1200 512M760 668Q760 710 740 725L720 740 727 917M360 585Q340 660 350 700L380 740Q375 780 410 830 435 860 433 917M0 830Q15 850 15 917"/></g>
      <g transform="translate(1140,846)"><path d="M0 533Q50 530 150 470L330 380Q430 355 530 362M105 0Q115 25 190 20L340 5M640 0L648 110 600 220 568 300V360M640 140Q700 165 800 150L1010 138 1085 185M800 0L805 150M925 90L935 135M640 20L750 28M325 170L370 175 405 190 470 185 530 235 580 250M605 210L830 270Q880 280 860 320L830 345 760 455M830 345L850 360M570 325L680 350 785 400M650 345L655 380 810 490 850 508M870 545Q820 570 810 630L760 715Q755 760 680 830 655 870 655 917M660 700V740L760 715M660 740L560 860Q520 900 480 917M0 835L180 917M285 870L260 917M1130 80L1040 270M1075 55H1150L1200 110M1100 917L1200 860M1130 840L1170 870"/></g>
      <g transform="translate(2280,846)"><path d="M0 65L178 232 305 150M265 0L315 150 328 350 345 490M290 65L440 0M498 0L530 185M602 165L530 185Q485 220 470 305L330 345M470 300L465 320M605 230L590 320M345 515L445 395Q560 415 680 405L820 393M850 392Q1000 390 1060 398M575 380V405M655 20L760 25 880 48 940 45M940 0L960 90 1000 210Q1010 320 1050 385 1110 430 1145 480L1160 630M1145 480L1080 525M1145 480L1200 420M1000 235L1040 228M345 515L280 610 210 740Q190 780 150 805L0 895M0 850L30 870M188 543L285 600M355 515Q365 700 410 840L445 917M440 895L550 850Q620 790 700 765L930 725 1000 675M655 660V608H760L765 680 785 740M830 620H858L848 740M768 685H910M1020 917Q1060 870 1110 840L1135 805M1170 0V75L1135 100V140M1170 80H1200M1170 30H1200"/></g>
      <g transform="translate(3408,846)"><path d="M90 370L20 475 30 630M0 440L20 475M40 0L42 80 0 120M30 10H65V35M42 75L80 80 85 115 130 115M590 30L505 210 440 340 380 437 295 430M760 30L725 110 650 200 590 340 625 420 600 500Q560 560 480 600 415 640 410 700V830L370 917M625 420L740 460M375 910L560 895 860 912M1040 917L1200 882M945 315L1010 310 1170 250 1200 220M970 0L955 40M800 25L830 38M1170 190L1200 205M0 800L10 790"/></g>
    </g>
    <g id="y">
      <path d="M0 258L300 238 640 216 840 196 1200 171 1440 156 1840 124 1990 111 2340 88 2430 81 2530 76 2630 96 2640 125 2675 161Q2740 120 2780 126L2810 135 2830 186 2920 181 2985 191H3055L3130 96 3142 50V0M2840 162L2875 146 2920 181M2960 0L3050 81 3430 131 3708 161 3968 196 4208 231 4408 256 4608 281M3050 81L2985 141V191L2975 376 2965 476 2980 626 2978 700 2960 766 2920 866 2890 1000V1061L2910 1096 3040 1246 3160 1376 3280 1511 3380 1626 3508 1686 3638 1763M2675 161L2660 206 2550 396 2538 466 2535 656 2500 710 2340 856 2290 896 2150 1016Q2060 1090 2020 1166L1920 1356 1820 1516 1740 1586 1520 1706 1440 1763M1980 0V106M2080 116L2120 186 2260 346Q2320 440 2430 471L2530 469 2610 484 2980 476 3180 471 3300 451 3380 416 3480 336 3648 216M2460 0L2440 81M2600 0L2490 66M3465 0L3425 126 3480 246 3513 316M4363 0L4408 226 4430 376 4438 536 4408 666 4298 866 4198 1056 4208 1106Q4310 1140 4360 1200L4458 1296Q4500 1350 4608 1406M4178 1086L4145 1140 4123 1216"/>
    </g>
    <g id="m"><path d="M180 390L300 435Q380 470 520 466L668 462Q860 470 1000 540 1080 570 1200 665L1290 746 1380 836 1430 861 1490 916Q1600 990 1760 1026L1940 1071 2070 1096Q2180 1120 2340 1236 2450 1320 2630 1356L2800 1386 2980 1399 3160 1401 3370 1431 3438 1456 3558 1491Q3700 1525 3838 1508L3948 1486 4058 1451 4158 1411 4408 1276 4608 1166M4108 1246L4073 1346 4048 1446 4008 1586 3968 1763M1940 1066L2150 1120M2060 1080L2150 1122"/></g>
    <g id="ramp"><path d="M4048 1366Q3970 1420 3953 1486M4083 1376Q4100 1410 4148 1406M4098 1436Q4100 1500 4058 1536M3370 1431Q3390 1496 3415 1496 3445 1490 3438 1456L3430 1420"/></g>
    <path id="o" d="M3513 316L3598 466 3648 566 3668 626Q3680 660 3740 690L3838 766 4008 926 4060 990Q4100 1050 4160 1080"/>
  </defs>
  <g stroke-linejoin="round">
    <use href="#w" stroke="#c4c4c4" stroke-width="19"/>
    <use href="#w" stroke="#fff" stroke-width="12"/>
    <use href="#ramp" stroke="#cf6a7e" stroke-width="17"/>
    <use href="#ramp" stroke="#e892a2" stroke-width="11"/>
    <use href="#m" stroke="#d0687d" stroke-width="30"/>
    <use href="#m" stroke="#e892a2" stroke-width="22"/>
    <use href="#y" stroke="#cfd285" stroke-width="27"/>
    <use href="#y" stroke="#f7fabf" stroke-width="19"/>
    <path d="M3833 1498Q3818 1530 3818 1590M668 440L690 590M3438 1400V1476" stroke="#fff" stroke-width="13"/>
    <use href="#o" stroke="#d4a06c" stroke-width="28" stroke-linecap="round"/>
    <use href="#o" stroke="#fcd6a4" stroke-width="21" stroke-linecap="round"/>
    <circle cx="4178" cy="1086" r="25" fill="#f7fabf" stroke="#d9a870" stroke-width="22"/>
    <circle cx="4178" cy="1086" r="25" stroke="#fcd6a4" stroke-width="16"/>
    <circle cx="2630" cy="1359" r="20" fill="#dd6f84" stroke="#fff" stroke-width="11"/>
  </g>

  <!-- railways -->
  <defs><path id="r" d="M0 1544L150 1456 300 1376 520 1296Q640 1240 800 1081L1000 976 1140 901 1200 851 1320 716Q1390 650 1480 631L1610 596 1760 516 2040 346 2260 206 2340 106 2400 0M2265 206Q2255 310 2300 346L2380 406 2440 456Q2500 560 2530 656L2650 846 2780 1061 2930 1216 3180 1471 3460 1763M3558 0L3858 156 4008 226Q4080 280 4158 296L4308 331 4608 398"/></defs>
  <use href="#r" stroke="#777" stroke-width="16" opacity=".9"/>
  <use href="#r" stroke="#dedede" stroke-width="5" stroke-dasharray="48 48"/>
  <rect x="789" y="1071" width="24" height="24" fill="#7782b8"/>

  <!-- municipal border -->
  <path transform="translate(0,846)" d="M10 440L35 490 85 498 78 570H118L150 455 112 445 110 385 75 370 100 360 110 318 220 365 300 400 360 450 430 490 455 560 470 580 435 632 500 638 575 658 582 770 535 808 590 880 568 917" stroke="#c98ac4" stroke-width="10" stroke-dasharray="28 18" opacity=".85"/>

  <!-- road shields -->
  <g stroke-width="6">
    <rect x="-40" y="312" width="221" height="103" rx="14" fill="#ecccd2" stroke="#d79aa8"/>
    <rect x="3156" y="1363" width="198" height="101" rx="14" fill="#ecccd2" stroke="#d79aa8"/>
    <rect x="3967" y="1484" width="89" height="101" rx="14" fill="#ecccd2" stroke="#d79aa8"/>
    <rect x="1243" y="115" width="161" height="101" rx="14" fill="#ecefd5" stroke="#c8c896"/>
    <rect x="2887" y="667" width="161" height="101" rx="14" fill="#ecefd5" stroke="#c8c896"/>
  </g>
  <g font-family="Noto Sans, sans-serif" font-weight="600" font-size="60" text-anchor="middle">
    <g fill="#94405f"><text x="82" y="388">E 20</text><text x="3255" y="1434">E 20</text><text x="4012" y="1554">9</text></g>
    <g fill="#606c34" font-weight="500"><text x="1320" y="186">161</text><text x="2968" y="740">167</text></g>
    <g font-style="italic" fill="#b8404c" stroke="#fff" stroke-width="10" paint-order="stroke" stroke-linejoin="round">
      <text x="1968" y="1100">52</text><text x="2170" y="1160">52</text><text x="2472" y="1338">51</text><text x="2794" y="1406">51</text><text x="3596" y="1524">50</text>
    </g>
  </g>

  <!-- place names -->
  <g font-family="Noto Sans, sans-serif" font-size="66" text-anchor="middle" fill="#4a4a4a" stroke="#fff" stroke-opacity=".75" stroke-width="12" stroke-linejoin="round" paint-order="stroke">
    <text x="633" y="222" font-size="60">Blommenslyst</text><text x="905" y="370" font-size="60">Vejrup</text>
    <text x="1967" y="63">Højstrup</text><text x="1992" y="216">Bolbro</text>
    <text x="2884" y="422">Hunderup</text><text x="2467" y="836">Dalum</text>
    <text x="3581" y="206">Korsløkke</text><text x="3926" y="510">Blangstedgård</text>
    <text x="4075" y="861">Tornbjerg</text><text x="2048" y="922">Sanderum</text>
    <text x="1774" y="1252">Højme</text><text x="2086" y="1388">Dyrup</text>
    <text x="2795" y="1217">Hjallese</text><text x="3932" y="1046">Holluf Pile</text>
    <text x="3921" y="1230">Neder Holluf</text>
    <text x="4505" y="1020" text-anchor="start">Tiet</text><text x="4452" y="1316" text-anchor="start">Fraug</text>
    <g font-style="italic" fill="#6b8766" font-size="60"><text x="1437" y="782">Elmelund</text><text x="1437" y="853">Skov</text><text x="34" y="772" text-anchor="end">rg</text></g>
  </g>

  <!-- vehicle position -->
  <path d="M2304 721C2269 721 2241 749 2241 784 2241 831 2304 897 2304 897S2367 831 2367 784C2367 749 2339 721 2304 721ZM2304 739A18 18 0 1 1 2304 775 18 18 0 1 1 2304 739ZM2304 828C2285 828 2273 818 2266 808 2272 795 2292 790 2304 790S2336 795 2342 808C2335 818 2323 828 2304 828Z" fill="#000" fill-rule="evenodd"/>
</svg>
</section>

<div role="status" class="flex h-[52px] items-center justify-center gap-[18px] bg-[#20ba56]">
  <svg class="h-6 w-[34px]" viewBox="0 0 34 24" fill="none" stroke="#fff" aria-hidden="true">
    <path d="M2 9Q17-4 32 9" stroke-width="4"/><path d="M8 15Q17 7 26 15" stroke-width="4"/><path d="M12 19Q17 15 22 19L17 24Z" fill="#fff" stroke="none"/>
  </svg>
  <span class="pt-0.5 text-[25px] leading-8 font-semibold">Connected to Toyota Aygo</span>
</div>

<nav class="grid h-[110px] grid-cols-3 bg-[#121212] px-6 text-[20px] leading-6 font-semibold text-[#8c8c8c]" aria-label="Main">
  <a href="#home" class="flex flex-col items-center pt-[17px]">
    <svg class="size-12" viewBox="0 0 24 24" fill="currentColor" aria-hidden="true"><path d="M10 20v-6h4v6h5v-8h3L12 3 2 12h3v8z"/></svg>
    <span class="mt-[3px]">Home</span>
  </a>
  <a href="#speed" aria-current="page" class="flex flex-col items-center pt-[17px] text-white">
    <svg class="size-12" viewBox="0 0 24 24" fill="currentColor" aria-hidden="true"><path d="M11 17c0 .55.45 1 1 1s1-.45 1-1-.45-1-1-1-1 .45-1 1zm0-14v4h2V5.080c3.390.49 6 3.390 6 6.920 0 3.870-3.130 7-7 7s-7-3.130-7-7c0-1.680.59-3.220 1.580-4.420L12 13l1.410-1.410-6.800-6.800v.02C4.420 6.450 3 9.050 3 12c0 4.970 4.020 9 9 9 4.970 0 9-4.030 9-9s-4.030-9-9-9h-1zm7 9c0-.55-.45-1-1-1s-1 .45-1 1 .45 1 1 1 1-.45 1-1zM6 12c0 .55.45 1 1 1s1-.45 1-1-.45-1-1-1-1 .45-1 1z"/></svg>
    <span class="mt-[3px]">Speed Assistance</span>
  </a>
  <a href="#user" class="flex flex-col items-center pt-[17px]">
    <svg class="size-12" viewBox="0 0 24 24" fill="currentColor" aria-hidden="true"><path d="M3 5v14c0 1.100.89 2 2 2h14c1.100 0 2-.9 2-2V5c0-1.100-.9-2-2-2H5c-1.110 0-2 .9-2 2zm12 4c0 1.660-1.340 3-3 3s-3-1.340-3-3 1.340-3 3-3 3 1.340 3 3zm-9 8c0-2 4-3.100 6-3.100s6 1.100 6 3.100v1H6v-1z"/></svg>
    <span class="mt-[3px]">User</span>
  </a>
</nav>
</body>
</html>
